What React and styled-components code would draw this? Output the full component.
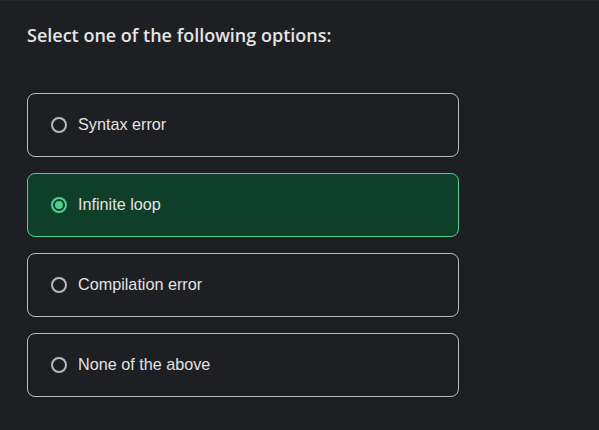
import React, { useState } from "react";
import styled, { createGlobalStyle } from "styled-components";

const GlobalStyle = createGlobalStyle`
  html, body {
    margin: 0;
    padding: 0;
    background: #1e1f23;
  }
`;

const Page = styled.div`
  min-height: 430px;
  box-sizing: border-box;
  border-top: 1px solid #26272c;
  padding: 22px 27px 0 27px;
  background: #1e1f23;
`;

const Title = styled.h2`
  margin: 0 0 45px 0;
  font-family: "Open Sans", "Noto Sans", sans-serif;
  font-weight: 600;
  font-size: 18px;
  line-height: 25px;
  color: #e4e4e6;
`;

const OptionList = styled.div`
  display: flex;
  flex-direction: column;
  gap: 16px;
  width: 432px;
`;

const Option = styled.label`
  display: flex;
  align-items: center;
  gap: 11px;
  height: 64px;
  box-sizing: border-box;
  padding: 0 0 0 23px;
  border-radius: 8px;
  border: 1px solid ${(props) => (props.checked ? "#4fd18b" : "#b4c0c6")};
  background: ${(props) => (props.checked ? "#0f3f2a" : "transparent")};
  cursor: pointer;
`;

const Radio = styled.span`
  width: 16px;
  height: 16px;
  box-sizing: border-box;
  border-radius: 50%;
  border: 2px solid ${(props) => (props.checked ? "#4fd18b" : "#b9b9b9")};
  display: flex;
  align-items: center;
  justify-content: center;
  &::after {
    content: "";
    width: 8px;
    height: 8px;
    border-radius: 50%;
    background: #4fd18b;
    display: ${(props) => (props.checked ? "block" : "none")};
  }
`;

const OptionText = styled.span`
  font-family: "Liberation Sans", Arial, sans-serif;
  font-size: 16.2px;
  color: #e2e2e2;
  margin-top: -1px;
`;

const options = [
  "Syntax error",
  "Infinite loop",
  "Compilation error",
  "None of the above",
];

const App = () => {
  const [selected, setSelected] = useState(1);

  return (
    <Page>
      <GlobalStyle />
      <Title>Select one of the following options:</Title>
      <OptionList>
        {options.map((text, i) => (
          <Option
            key={text}
            checked={selected === i}
            onClick={() => setSelected(i)}
          >
            <Radio checked={selected === i} />
            <OptionText>{text}</OptionText>
          </Option>
        ))}
      </OptionList>
    </Page>
  );
};

export default App;
